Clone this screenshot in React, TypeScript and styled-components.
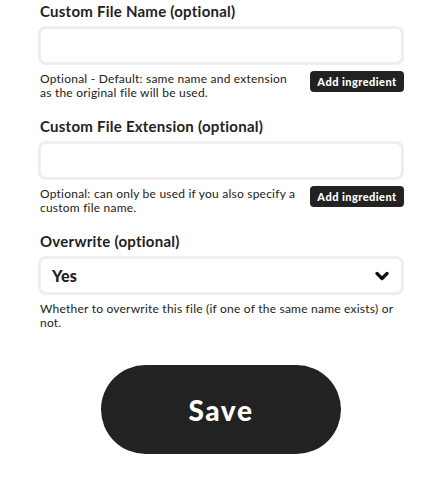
import React from "react";
import styled, { createGlobalStyle } from "styled-components";

const Global = createGlobalStyle`
  html, body { margin: 0; padding: 0; background: #fff; }
  body { font-family: Lato, "Noto Sans", "Liberation Sans", sans-serif; color: #222; }
  * { box-sizing: border-box; }
`;

const Page = styled.div`
  width: 441px;
  padding: 1px 37px 0 38px;
  display: flex;
  flex-direction: column;
`;

const Field = styled.section`
  display: flex;
  flex-direction: column;
  margin-bottom: 17px;
`;

const Label = styled.label`
  font-size: 15px;
  font-weight: 700;
  line-height: 20px;
  letter-spacing: 0.25px;
  color: #222;
  padding-left: 2px;
`;

const Box = styled.div`
  margin-top: 5px;
  height: 39px;
  border: 3px solid #eeeeee;
  border-radius: 8px;
  background: #fff;
  display: flex;
  align-items: center;
  padding: 0 12px 0 11px;
`;

const SelectValue = styled.span`
  flex: 1;
  font-size: 16px;
  font-weight: 900;
  letter-spacing: 0.2px;
  color: #222;
`;

const HelpRow = styled.div`
  margin-top: 6px;
  display: flex;
  align-items: flex-start;
`;

const HelpText = styled.p<{ $withAction?: boolean }>`
  flex: 1;
  margin: 1px ${(p) => (p.$withAction ? "12px" : "0")} 0 0;
  padding-left: 2px;
  font-size: 12px;
  line-height: 13.5px;
  letter-spacing: 0.22px;
  color: #222;
`;

const Ingredient = styled.button`
  flex: none;
  width: 94px;
  height: 21px;
  border: none;
  border-radius: 4px;
  background: #222;
  color: #fff;
  font-family: Lato, "Noto Sans", sans-serif;
  font-size: 11px;
  font-weight: 900;
  padding: 0;
  letter-spacing: 0.45px;
`;

const SaveButton = styled.button`
  align-self: center;
  margin-top: 19px;
  width: 240px;
  height: 89px;
  border: none;
  border-radius: 45px;
  background: #222;
  color: #fff;
  font-family: Lato, "Noto Sans", sans-serif;
  font-size: 28px;
  font-weight: 900;
  letter-spacing: 1.6px;
`;

const Chevron = () => (
  <svg width="14" height="10" viewBox="0 0 14 10">
    <polyline
      points="2,2.5 7,7.5 12,2.5"
      fill="none"
      stroke="#111"
      strokeWidth="3.2"
      strokeLinecap="round"
      strokeLinejoin="round"
    />
  </svg>
);

export default function App() {
  return (
    <>
      <Global />
      <Page>
        <Field>
          <Label>Custom File Name (optional)</Label>
          <Box />
          <HelpRow>
            <HelpText $withAction>
              Optional - Default: same name and extension as the original file will be used.
            </HelpText>
            <Ingredient>Add ingredient</Ingredient>
          </HelpRow>
        </Field>
        <Field>
          <Label>Custom File Extension (optional)</Label>
          <Box />
          <HelpRow>
            <HelpText $withAction>
              Optional: can only be used if you also specify a custom file name.
            </HelpText>
            <Ingredient>Add ingredient</Ingredient>
          </HelpRow>
        </Field>
        <Field>
          <Label>Overwrite (optional)</Label>
          <Box>
            <SelectValue>Yes</SelectValue>
            <Chevron />
          </Box>
          <HelpRow>
            <HelpText>
              Whether to overwrite this file (if one of the same name exists) or not.
            </HelpText>
          </HelpRow>
        </Field>
        <SaveButton>Save</SaveButton>
      </Page>
    </>
  );
}
